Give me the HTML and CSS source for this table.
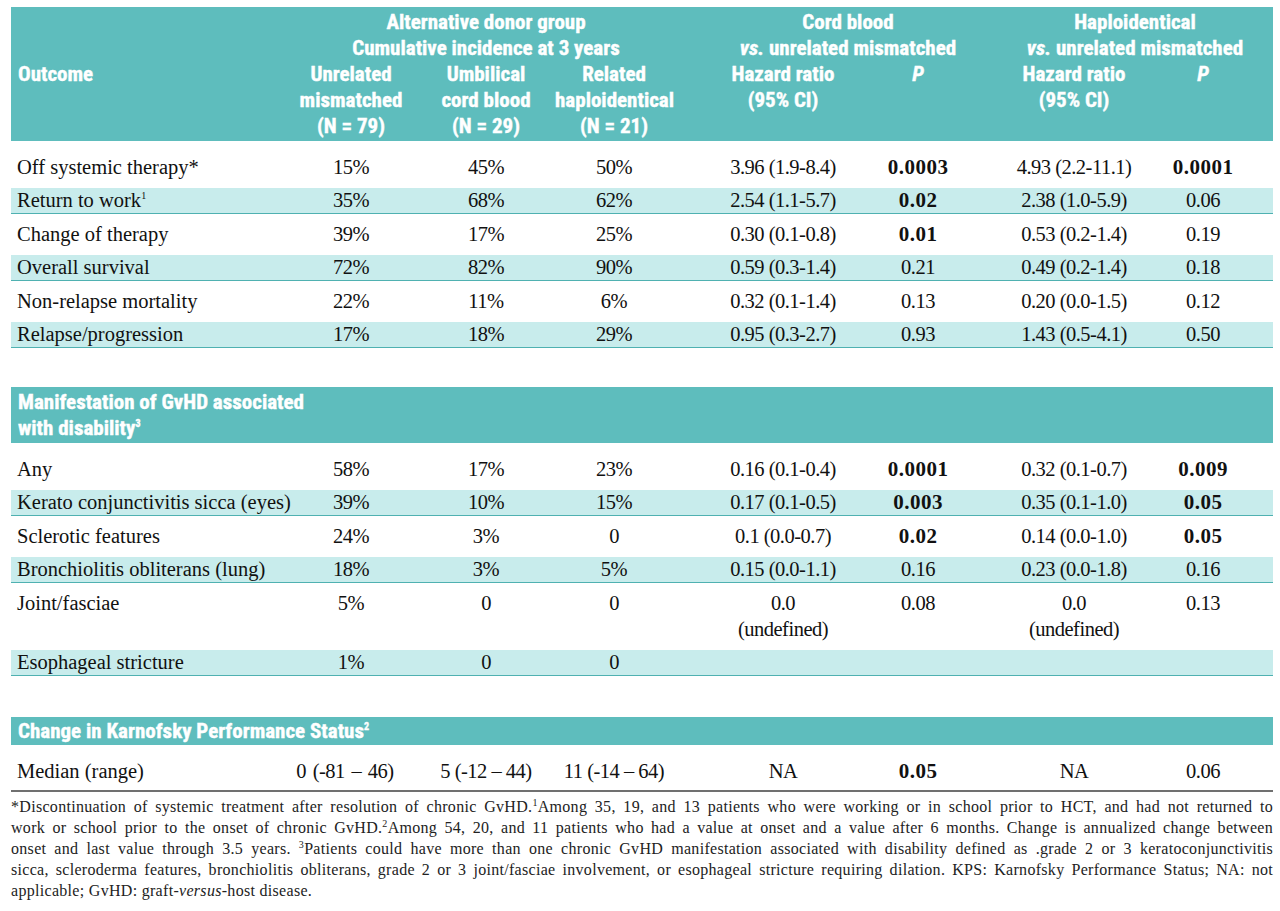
FILE: index.html
```html
<!DOCTYPE html>
<html>
<head>
<meta charset="utf-8">
<title>Chronic GvHD outcomes by alternative donor group</title>
<link rel="stylesheet" href="styles.css">
</head>
<body>
<div class="page">
<table class="tbl">
<colgroup>
<col class="c-out"><col class="c-un"><col class="c-cb"><col class="c-hap"><col class="c-hr1"><col class="c-p1"><col class="c-hr2"><col class="c-p2">
</colgroup>
<thead>
<tr class="h1">
<th rowspan="2" class="outcome">Outcome</th>
<th colspan="3" class="grp-alt">Alternative donor group<br>Cumulative incidence at 3 years</th>
<th colspan="2" class="grp-cb">Cord blood<br><i>vs.</i> unrelated mismatched</th>
<th colspan="2" class="grp-hap">Haploidentical<br><i>vs.</i> unrelated mismatched</th>
</tr>
<tr class="h2">
<th>Unrelated<br>mismatched<br>(N = 79)</th>
<th>Umbilical<br>cord blood<br>(N = 29)</th>
<th>Related<br>haploidentical<br>(N = 21)</th>
<th class="hr1">Hazard ratio<br>(95% CI)</th>
<th><i>P</i></th>
<th>Hazard ratio<br>(95% CI)</th>
<th class="p2"><i>P</i></th>
</tr>
</thead>
<tbody>
<tr class="r first"><td>Off systemic therapy*</td><td>15%</td><td>45%</td><td>50%</td><td>3.96 (1.9-8.4)</td><td><b>0.0003</b></td><td>4.93 (2.2-11.1)</td><td><b>0.0001</b></td></tr>
<tr class="r alt"><td>Return to work<sup class="fn">1</sup></td><td>35%</td><td>68%</td><td>62%</td><td>2.54 (1.1-5.7)</td><td><b>0.02</b></td><td>2.38 (1.0-5.9)</td><td>0.06</td></tr>
<tr class="r"><td>Change of therapy</td><td>39%</td><td>17%</td><td>25%</td><td>0.30 (0.1-0.8)</td><td><b>0.01</b></td><td>0.53 (0.2-1.4)</td><td>0.19</td></tr>
<tr class="r alt"><td>Overall survival</td><td>72%</td><td>82%</td><td>90%</td><td>0.59 (0.3-1.4)</td><td>0.21</td><td>0.49 (0.2-1.4)</td><td>0.18</td></tr>
<tr class="r"><td>Non-relapse mortality</td><td>22%</td><td>11%</td><td>6%</td><td>0.32 (0.1-1.4)</td><td>0.13</td><td>0.20 (0.0-1.5)</td><td>0.12</td></tr>
<tr class="r alt"><td>Relapse/progression</td><td>17%</td><td>18%</td><td>29%</td><td>0.95 (0.3-2.7)</td><td>0.93</td><td>1.43 (0.5-4.1)</td><td>0.50</td></tr>
<tr class="gap gap1"><td colspan="8"></td></tr>
<tr class="sect"><th colspan="8">Manifestation of GvHD associated<br>with disability<sup class="fn">3</sup></th></tr>
<tr class="r first"><td>Any</td><td>58%</td><td>17%</td><td>23%</td><td>0.16 (0.1-0.4)</td><td><b>0.0001</b></td><td>0.32 (0.1-0.7)</td><td><b>0.009</b></td></tr>
<tr class="r alt"><td>Kerato conjunctivitis sicca (eyes)</td><td>39%</td><td>10%</td><td>15%</td><td>0.17 (0.1-0.5)</td><td><b>0.003</b></td><td>0.35 (0.1-1.0)</td><td><b>0.05</b></td></tr>
<tr class="r"><td>Sclerotic features</td><td>24%</td><td>3%</td><td>0</td><td>0.1 (0.0-0.7)</td><td><b>0.02</b></td><td>0.14 (0.0-1.0)</td><td><b>0.05</b></td></tr>
<tr class="r alt"><td>Bronchiolitis obliterans (lung)</td><td>18%</td><td>3%</td><td>5%</td><td>0.15 (0.0-1.1)</td><td>0.16</td><td>0.23 (0.0-1.8)</td><td>0.16</td></tr>
<tr class="r top"><td>Joint/fasciae</td><td>5%</td><td>0</td><td>0</td><td>0.0<br>(undefined)</td><td>0.08</td><td>0.0<br>(undefined)</td><td>0.13</td></tr>
<tr class="r alt"><td>Esophageal stricture</td><td>1%</td><td>0</td><td>0</td><td></td><td></td><td></td><td></td></tr>
<tr class="gap gap2"><td colspan="8"></td></tr>
<tr class="sect one"><th colspan="8">Change in Karnofsky Performance Status<sup class="fn">2</sup></th></tr>
<tr class="r first last"><td>Median (range)</td><td class="rng">0 (-81 – 46)</td><td>5 (-12 – 44)</td><td>11 (-14 – 64)</td><td>NA</td><td><b>0.05</b></td><td>NA</td><td>0.06</td></tr>
</tbody>
</table>
<div class="note">
<span class="ln">*Discontinuation of systemic treatment after resolution of chronic GvHD.<sup>1</sup>Among 35, 19, and 13 patients who were working or in school prior to HCT, and had not returned to</span>
<span class="ln">work or school prior to the onset of chronic GvHD.<sup>2</sup>Among 54, 20, and 11 patients who had a value at onset and a value after 6 months. Change is annualized change between</span>
<span class="ln">onset and last value through 3.5 years. <sup>3</sup>Patients could have more than one chronic GvHD manifestation associated with disability defined as .grade 2 or 3 keratoconjunctivitis</span>
<span class="ln">sicca, scleroderma features, bronchiolitis obliterans, grade 2 or 3 joint/fasciae involvement, or esophageal stricture requiring dilation. KPS: Karnofsky Performance Status; NA: not</span>
<span class="ln end">applicable; GvHD: graft-<i>versus</i>-host disease.</span>
</div>
</div>
</body>
</html>
```

FILE: styles.css
```css
html, body {
  margin: 0;
  padding: 0;
  background: #ffffff;
}

.page {
  padding: 7px 7px 0 11px;
  width: 1262px;
}

.tbl {
  width: 1262px;
  table-layout: fixed;
  border-collapse: separate;
  border-spacing: 0;
  font-family: "Liberation Serif", "Times New Roman", serif;
  color: #111;
}

.c-out { width: 274px; }
.c-un  { width: 132px; }
.c-cb  { width: 138px; }
.c-hap { width: 118px; }
.c-hr1 { width: 180px; }
.c-p1  { width: 130px; }
.c-hr2 { width: 182px; }
.c-p2  { width: 108px; }

/* header band */
.tbl th {
  font-family: "Roboto Condensed", "Noto Sans Condensed", "Liberation Sans Narrow", "Arial Narrow", "Noto Sans", sans-serif;
  font-stretch: condensed;
  font-weight: bold;
  font-size: 21px;
  line-height: 26px;
  color: #ffffff;
  -webkit-text-stroke: 0.4px #ffffff;
  background: #5ebdbd;
  padding: 0;
  text-align: center;
  vertical-align: top;
  white-space: nowrap;
}

.h1 th { padding-top: 2px; }
.h2 th { padding-bottom: 2px; }

.tbl th.outcome {
  text-align: left;
  vertical-align: middle;
  padding: 0 0 0 7px;
}

.tbl th.grp-alt { padding-left: 14px; }
.tbl th.grp-cb  { padding-left: 40px; }
.tbl th.grp-hap { padding-left: 14px; }
.tbl th.hr1     { padding-left: 40px; }
.tbl th.p2      { padding-right: 32px; }

.sect th {
  text-align: left;
  padding: 2px 0 2px 7px;
}

.sect.one th {
  padding: 1px 0 1px 7px;
}

.fn {
  font-size: 10px;
  line-height: 0;
  vertical-align: 8px;
}

/* body rows */
.r td {
  font-size: 20.5px;
  line-height: 26px;
  padding: 7px 0 8px;
  text-align: center;
  vertical-align: top;
  white-space: nowrap;
}

.r td:first-child {
  text-align: left;
  padding-left: 6px;
}

.r td + td {
  letter-spacing: -0.5px;
}

.r td:nth-child(5) { padding-left: 40px; }
.r td:nth-child(8) { padding-right: 32px; }

.r.first td {
  padding-top: 13px;
}

.r.alt td {
  background: #c8ecec;
  padding-top: 0;
  padding-bottom: 0;
  line-height: 25px;
  border-bottom: 1px solid #4fb1b1;
}

.r.last td {
  padding-bottom: 6px;
  border-bottom: 2px solid #707070;
}

.r td.rng {
  padding-right: 12px;
  word-spacing: 2px;
}

.r b {
  font-size: 21px;
  letter-spacing: 0.5px;
}

.gap td {
  padding: 0;
  height: 39px;
}

.gap2 td {
  height: 41px;
}

/* footnote */
.note {
  margin-top: 4px;
  width: 1262px;
  font-family: "Liberation Serif", "Times New Roman", serif;
  font-size: 16px;
  line-height: 21px;
  letter-spacing: 0.3px;
  color: #222;
}

.note .ln {
  display: block;
  text-align: justify;
  text-align-last: justify;
}

.note .ln.end {
  text-align-last: left;
}

.note sup {
  font-size: 10px;
  line-height: 0;
  vertical-align: 6px;
}
```
